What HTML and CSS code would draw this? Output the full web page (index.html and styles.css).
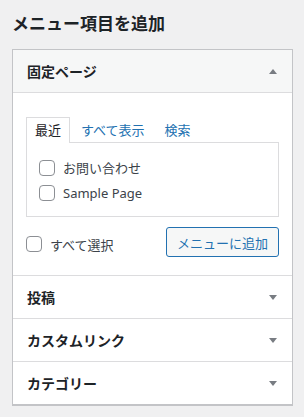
FILE: index.html
```html
<!doctype html>
<html lang="ja">
  <head>
    <meta charset="UTF-8" />
    <meta name="viewport" content="width=device-width, initial-scale=1.0" />
    <title>メニュー項目を追加</title>
    <link rel="stylesheet" href="styles.css">
  </head>
  <body>
    <h2 class="title">メニュー項目を追加</h2>
    <div class="accordion">
      <div class="section open">
        <div class="section-title">
          <h3>固定ページ</h3>
          <span class="arrow up"></span>
        </div>
        <div class="section-content">
          <ul class="tabs">
            <li class="tab active">最近</li>
            <li class="tab"><a href="#">すべて表示</a></li>
            <li class="tab"><a href="#">検索</a></li>
          </ul>
          <div class="tabs-panel">
            <label class="item"><span class="checkbox"></span>お問い合わせ</label>
            <label class="item"><span class="checkbox"></span>Sample Page</label>
          </div>
          <div class="actions">
            <label class="select-all"><span class="checkbox"></span>すべて選択</label>
            <button class="add-button">メニューに追加</button>
          </div>
        </div>
      </div>
      <div class="section">
        <div class="section-title">
          <h3>投稿</h3>
          <span class="arrow"></span>
        </div>
      </div>
      <div class="section">
        <div class="section-title">
          <h3>カスタムリンク</h3>
          <span class="arrow"></span>
        </div>
      </div>
      <div class="section">
        <div class="section-title">
          <h3>カテゴリー</h3>
          <span class="arrow"></span>
        </div>
      </div>
    </div>
  </body>
</html>
```

FILE: styles.css
```css
* {
  margin: 0;
  padding: 0;
  box-sizing: border-box;
}
body {
  background-color: #f0f0f1;
  color: #1d2327;
  font-family: "Noto Sans", "Noto Sans CJK JP", sans-serif;
  font-size: 13px;
  padding: 0 11px 0 12px;
}
.title {
  font-size: 17px;
  font-weight: 600;
  line-height: 24px;
  padding-top: 12px;
  margin-bottom: 13px;
}
.accordion {
  width: 281px;
  border: 1px solid #c3c4c7;
  border-bottom-width: 2px;
  background: #fff;
}
.section + .section {
  border-top: 1px solid #dcdcde;
}
.section-title {
  display: flex;
  align-items: center;
  justify-content: space-between;
  height: 42px;
  padding: 0 15px 0 14px;
}
.open .section-title {
  height: 43px;
  background: #f6f7f7;
  border-bottom: 1px solid #dcdcde;
}
.section-title h3 {
  font-size: 14px;
  font-weight: 600;
  line-height: 21px;
}
.arrow {
  width: 0;
  height: 0;
  border-left: 4px solid transparent;
  border-right: 4px solid transparent;
  border-top: 5px solid #787c82;
}
.arrow.up {
  border-top: none;
  border-bottom: 5px solid #787c82;
}
.section-content {
  padding: 24px 13px 18px;
}
.tabs {
  list-style: none;
  display: flex;
  gap: 2px;
  margin-bottom: -1px;
}
.tab {
  height: 26px;
  line-height: 24px;
  padding: 0 8px;
  border: 1px solid transparent;
  border-bottom: none;
}
.tab.active {
  background: #fff;
  border-color: #dcdcde;
}
.tab a {
  color: #2271b1;
  text-decoration: none;
}
.tabs-panel {
  border: 1px solid #dcdcde;
  padding: 12px 12px 11px;
}
.item {
  display: flex;
  align-items: center;
  gap: 8px;
  height: 25px;
  color: #3c434a;
}
.checkbox {
  width: 16px;
  height: 16px;
  border: 1px solid #8c8f94;
  border-radius: 4px;
  background: #fff;
}
.actions {
  display: flex;
  justify-content: space-between;
  align-items: center;
  margin-top: 10px;
}
.select-all {
  display: flex;
  align-items: center;
  gap: 8px;
  color: #3c434a;
  margin-top: 4px;
}
.add-button {
  height: 30px;
  padding: 0 10px;
  border: 1px solid #2271b1;
  border-radius: 3px;
  background: #f6f7f7;
  color: #2271b1;
  font-family: inherit;
  font-size: 13px;
}
```
